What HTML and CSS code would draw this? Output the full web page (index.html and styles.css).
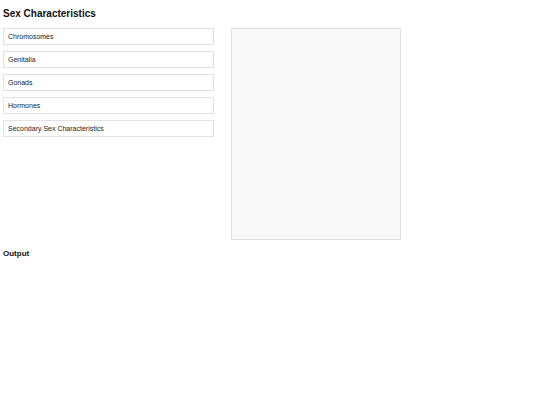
FILE: index.html
```html
<!DOCTYPE html>
<html>
<head>
<meta charset="utf-8">
<link rel="stylesheet" href="styles.css">
</head>
<body>
<h1 class="title">Sex Characteristics</h1>
<div class="main">
  <div class="list">
    <div class="item">Chromosomes</div>
    <div class="item">Genitalia</div>
    <div class="item">Gonads</div>
    <div class="item">Hormones</div>
    <div class="item">Secondary Sex Characteristics</div>
  </div>
  <div class="panel"></div>
</div>
<h2 class="output">Output</h2>
</body>
</html>
```
FILE: styles.css
```css
html, body {
  margin: 0;
  background: #ffffff;
}
body {
  padding: 4px 3px;
  font-family: "Liberation Sans", Arial, sans-serif;
  color: #111;
}
.title {
  margin: 4px 0 0 0;
  font-size: 10px;
  line-height: 12px;
  font-weight: bold;
}
.main {
  display: flex;
  align-items: flex-start;
  gap: 17px;
  margin-top: 8px;
}
.list {
  width: 211px;
  display: flex;
  flex-direction: column;
  gap: 6px;
}
.item {
  box-sizing: border-box;
  height: 17px;
  border: 1px solid #e2e2e2;
  padding-left: 4px;
  font-size: 7px;
  line-height: 15px;
  color: #222;
  background: #fff;
}
.panel {
  box-sizing: border-box;
  width: 170px;
  height: 212px;
  background: #f8f8f8;
  border: 1px solid #e0e0e0;
}
.output {
  margin: 9px 0 0 0;
  font-size: 8px;
  line-height: 10px;
  font-weight: bold;
}
```
